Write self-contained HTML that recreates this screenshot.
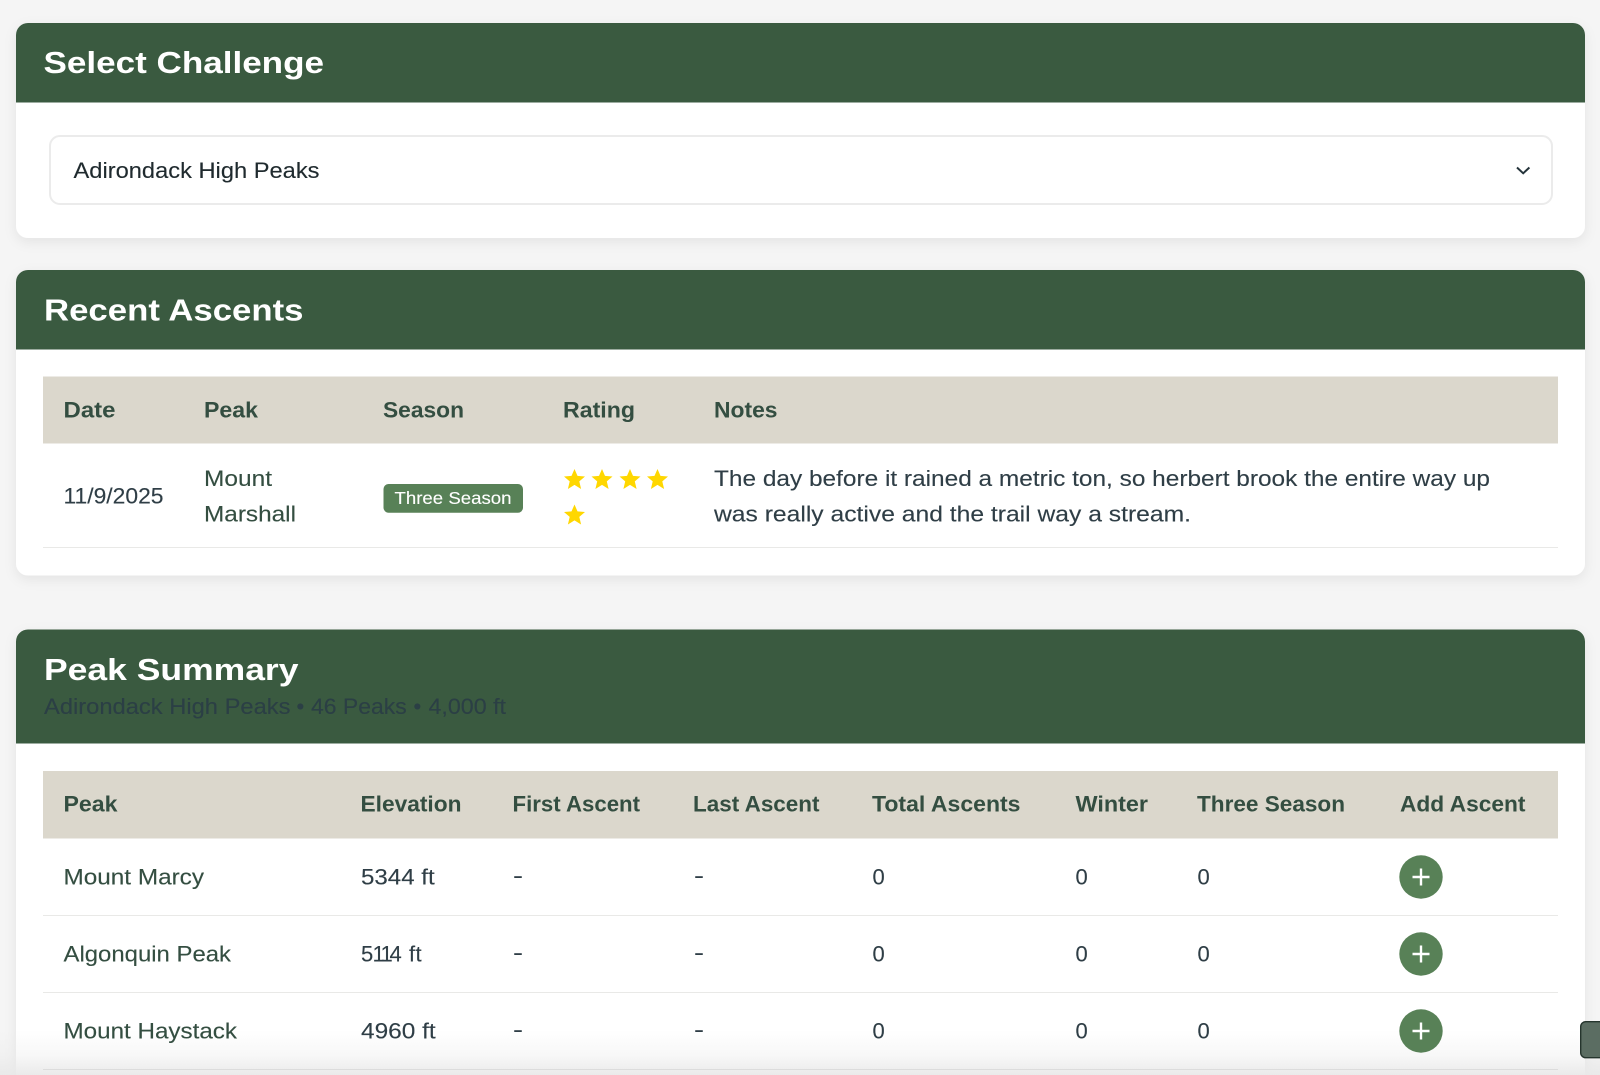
<!DOCTYPE html>
<html lang="en"><head><meta charset="utf-8"><title>Peak Summary</title>
<style>
html,body{margin:0;padding:0;width:1600px;height:1075px;overflow:hidden;background:#f5f5f5}
svg{display:block;position:absolute;left:0;top:0}
text{font-family:"Liberation Sans",sans-serif;font-size:22px;fill:#2f3e46;stroke:#2f3e46;stroke-width:.12px}
.t{font-size:31px;font-weight:700;fill:#fff;stroke:none}
.h{font-weight:700;fill:#344e41;stroke:none}
.n{fill:#344e41;stroke:#344e41}
.b{font-size:17.5px;fill:#fff;stroke:#fff}
.s{fill:#2b3f45;stroke:#2b3f45}
.c{fill:#fff;filter:url(#sh)}
</style></head><body>
<svg width="1600" height="1075" viewBox="0 0 1600 1075" xmlns="http://www.w3.org/2000/svg">
<defs>
<filter id="sh" x="-5%" y="-20%" width="110%" height="140%"><feDropShadow dx="0" dy="4" stdDeviation="6" flood-color="#000" flood-opacity=".07"/></filter>
<linearGradient id="fade" x1="0" y1="0" x2="0" y2="1"><stop offset="0" stop-color="#e8e8e8" stop-opacity="0"/><stop offset=".55" stop-color="#e8e8e8" stop-opacity=".3"/><stop offset="1" stop-color="#e8e8e8" stop-opacity=".9"/></linearGradient>
<polygon id="star" points="0,-10.5 3,-3.6 10.5,-3 4.8,1.9 6.6,9.5 0,5.4 -6.6,9.5 -4.8,1.9 -10.5,-3 -3,-3.6"/>
</defs>

<!-- Card 1 -->
<rect class="c" x="16" y="23" width="1569" height="215" rx="12"/>
<path d="M16 102.500V35a12 12 0 0 1 12-12H1573a12 12 0 0 1 12 12V102.500Z" fill="#3a5a40"/>
<text class="t" x="43.500" y="73.200" textLength="280.500" lengthAdjust="spacingAndGlyphs">Select Challenge</text>
<rect x="50" y="136" width="1502" height="68" rx="10" fill="#fff" stroke="#ebebeb" stroke-width="2"/>
<text x="73.500" y="178" textLength="246" lengthAdjust="spacingAndGlyphs" style="fill:#1f2a2e;stroke:#1f2a2e">Adirondack High Peaks</text>
<path d="M1517 167.500l6.200 5.800 6.200-5.800" fill="none" stroke="#24333a" stroke-width="2"/>

<!-- Card 2 -->
<rect class="c" x="16" y="270" width="1569" height="305.500" rx="12"/>
<path d="M16 349.500V282a12 12 0 0 1 12-12H1573a12 12 0 0 1 12 12V349.500Z" fill="#3a5a40"/>
<text class="t" x="44" y="320.300" textLength="259.500" lengthAdjust="spacingAndGlyphs">Recent Ascents</text>
<rect x="43" y="376.500" width="1515" height="67" fill="#dbd7cc"/>
<text class="h" x="63.500" y="417.700" textLength="52" lengthAdjust="spacingAndGlyphs">Date</text>
<text class="h" x="204" y="417.700" textLength="54" lengthAdjust="spacingAndGlyphs">Peak</text>
<text class="h" x="383" y="417.700" textLength="81" lengthAdjust="spacingAndGlyphs">Season</text>
<text class="h" x="563" y="417.700" textLength="72" lengthAdjust="spacingAndGlyphs">Rating</text>
<text class="h" x="714" y="417.700" textLength="63.500" lengthAdjust="spacingAndGlyphs">Notes</text>
<text x="63.500" y="503.300" textLength="100" lengthAdjust="spacingAndGlyphs">11/9/2025</text>
<text class="n" x="204" y="486" textLength="68" lengthAdjust="spacingAndGlyphs">Mount</text>
<text class="n" x="204" y="521.700" textLength="92" lengthAdjust="spacingAndGlyphs">Marshall</text>
<rect x="383.500" y="484" width="139.500" height="28.700" rx="5" fill="#588157"/>
<text class="b" x="394.500" y="504" textLength="117" lengthAdjust="spacingAndGlyphs">Three Season</text>
<g fill="#ffd700">
<use href="#star" x="574.500" y="479.500"/><use href="#star" x="602" y="479.500"/><use href="#star" x="630" y="479.500"/><use href="#star" x="657.500" y="479.500"/><use href="#star" x="574.500" y="515"/>
</g>
<text x="714" y="486" textLength="776" lengthAdjust="spacingAndGlyphs">The day before it rained a metric ton, so herbert brook the entire way up</text>
<text x="714" y="521.700" textLength="477" lengthAdjust="spacingAndGlyphs">was really active and the trail way a stream.</text>
<rect x="43" y="547" width="1515" height="1" fill="#e9e9e7"/>

<!-- Card 3 -->
<rect class="c" x="16" y="629.500" width="1569" height="480" rx="12"/>
<path d="M16 743.500V641.500a12 12 0 0 1 12-12H1573a12 12 0 0 1 12 12V743.500Z" fill="#3a5a40"/>
<text class="t" x="44" y="680" textLength="254.500" lengthAdjust="spacingAndGlyphs">Peak Summary</text>
<text class="s" x="44" y="714" textLength="246.500" lengthAdjust="spacingAndGlyphs">Adirondack High Peaks</text>
<text class="s" x="296.500" y="714">•</text>
<text class="s" x="311" y="714" textLength="95.700" lengthAdjust="spacingAndGlyphs">46 Peaks</text>
<text class="s" x="413.500" y="714">•</text>
<text class="s" x="428.500" y="714" textLength="77.500" lengthAdjust="spacingAndGlyphs">4,000 ft</text>
<rect x="43" y="771" width="1515" height="67.500" fill="#dbd7cc"/>
<text class="h" x="63.500" y="811.700" textLength="54" lengthAdjust="spacingAndGlyphs">Peak</text>
<text class="h" x="360.500" y="811.700" textLength="101" lengthAdjust="spacingAndGlyphs">Elevation</text>
<text class="h" x="512.500" y="811.700" textLength="127.500" lengthAdjust="spacingAndGlyphs">First Ascent</text>
<text class="h" x="693" y="811.700" textLength="126.500" lengthAdjust="spacingAndGlyphs">Last Ascent</text>
<text class="h" x="872" y="811.700" textLength="148.500" lengthAdjust="spacingAndGlyphs">Total Ascents</text>
<text class="h" x="1075.500" y="811.700" textLength="72.500" lengthAdjust="spacingAndGlyphs">Winter</text>
<text class="h" x="1197" y="811.700" textLength="148" lengthAdjust="spacingAndGlyphs">Three Season</text>
<text class="h" x="1400" y="811.700" textLength="125.500" lengthAdjust="spacingAndGlyphs">Add Ascent</text>

<rect x="0" y="1030" width="1600" height="45" fill="url(#fade)"/>

<text class="n" x="63.500" y="884.500" textLength="140.500" lengthAdjust="spacingAndGlyphs">Mount Marcy</text>
<text x="361" y="884.500" textLength="73.700" lengthAdjust="spacingAndGlyphs">5344 ft</text>
<text x="513" y="883" textLength="10" lengthAdjust="spacingAndGlyphs">-</text>
<text x="694" y="883" textLength="10" lengthAdjust="spacingAndGlyphs">-</text>
<text x="872.500" y="884.500">0</text><text x="1075.500" y="884.500">0</text><text x="1197.500" y="884.500">0</text>
<circle cx="1421" cy="877" r="21.700" fill="#588157"/><path d="M1412.500 877h17M1421 868.500v17" stroke="#fff" stroke-width="2.400"/>
<rect x="43" y="915" width="1515" height="1" fill="#e9e9e7"/>

<text class="n" x="63.500" y="961.700" textLength="167.500" lengthAdjust="spacingAndGlyphs">Algonquin Peak</text>
<text x="361 372.500 380.500 389.500 401.500 409 415.500" y="961.700">5114 ft</text>
<text x="513" y="960.200" textLength="10" lengthAdjust="spacingAndGlyphs">-</text>
<text x="694" y="960.200" textLength="10" lengthAdjust="spacingAndGlyphs">-</text>
<text x="872.500" y="961.700">0</text><text x="1075.500" y="961.700">0</text><text x="1197.500" y="961.700">0</text>
<circle cx="1421" cy="954" r="21.700" fill="#588157"/><path d="M1412.500 954h17M1421 945.500v17" stroke="#fff" stroke-width="2.400"/>
<rect x="43" y="992" width="1515" height="1" fill="#e9e9e7"/>

<text class="n" x="63.500" y="1038.500" textLength="173.500" lengthAdjust="spacingAndGlyphs">Mount Haystack</text>
<text x="361" y="1038.500" textLength="74.700" lengthAdjust="spacingAndGlyphs">4960 ft</text>
<text x="513" y="1037" textLength="10" lengthAdjust="spacingAndGlyphs">-</text>
<text x="694" y="1037" textLength="10" lengthAdjust="spacingAndGlyphs">-</text>
<text x="872.500" y="1038.500">0</text><text x="1075.500" y="1038.500">0</text><text x="1197.500" y="1038.500">0</text>
<circle cx="1421" cy="1031" r="21.700" fill="#588157"/><path d="M1412.500 1031h17M1421 1022.500v17" stroke="#fff" stroke-width="2.400"/>
<rect x="43" y="1069" width="1515" height="1" fill="#dcdcdc"/>

<rect x="1580.700" y="1021.700" width="24" height="36" rx="5" fill="#5b6d62" stroke="#25352d" stroke-width="1.400"/>
</svg>
</body></html>
